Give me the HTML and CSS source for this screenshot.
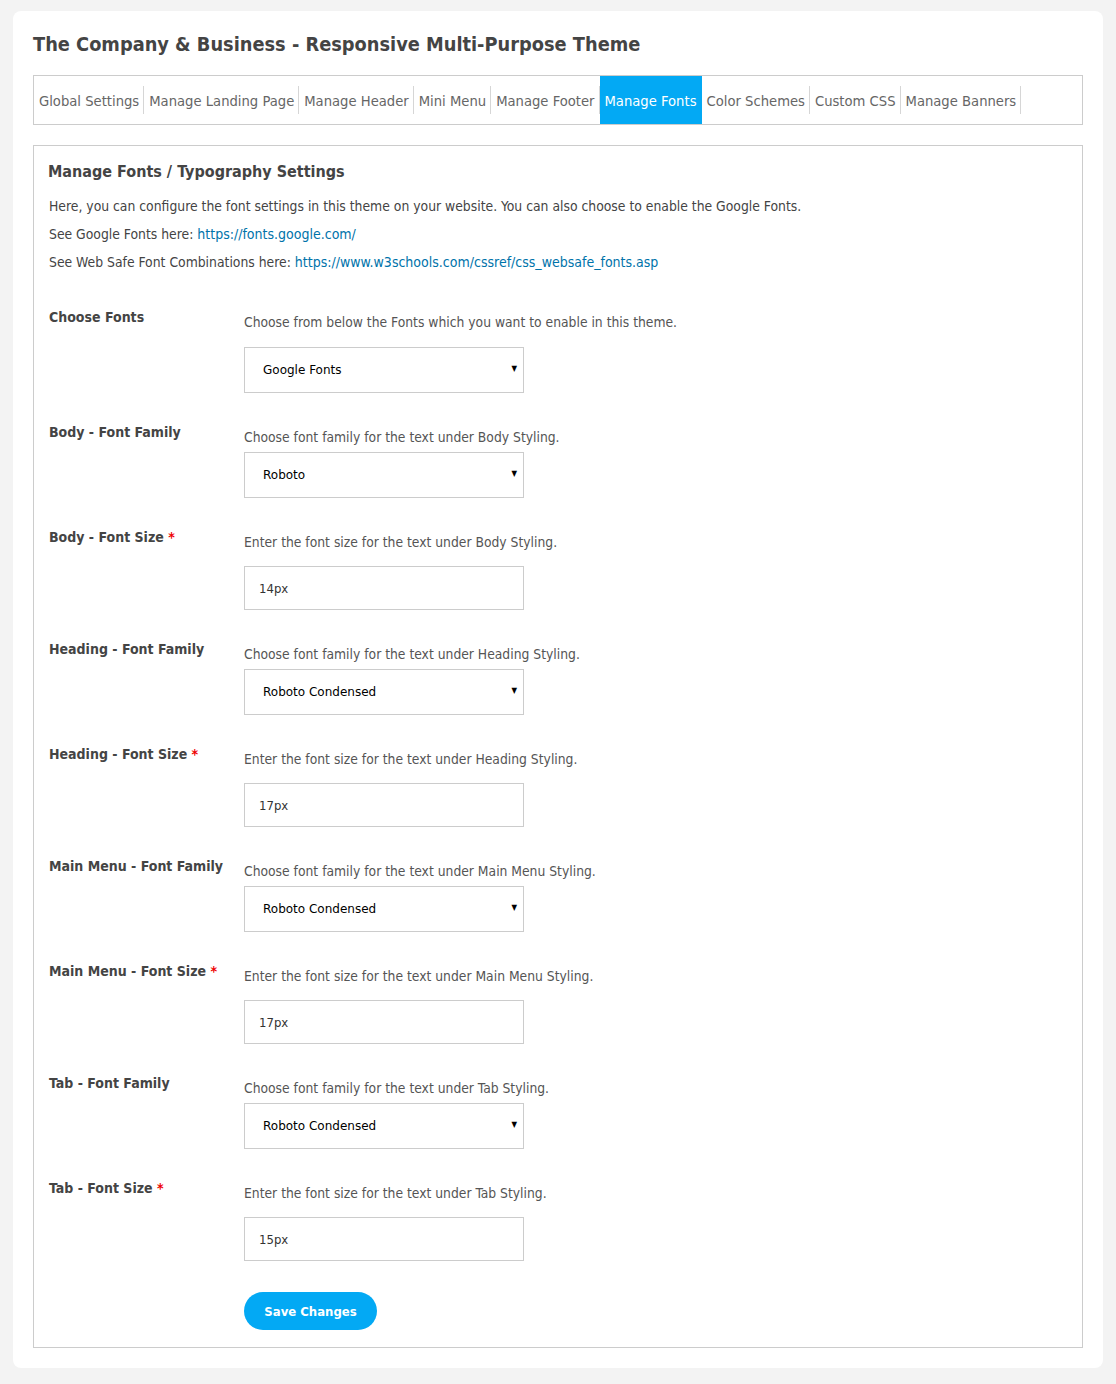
FILE: index.html
```html
<!DOCTYPE html>
<html lang="en">
<head>
    <meta charset="UTF-8">
    <meta name="viewport" content="width=device-width, initial-scale=1.0">
    <title>Manage Fonts</title>
    <link rel="stylesheet" href="styles.css">
</head>
<body>
    <div class="wrap">
        <h1 class="page-title">The Company &amp; Business - Responsive Multi-Purpose Theme</h1>

        <nav class="tabs">
            <a href="#">Global Settings</a>
            <a href="#">Manage Landing Page</a>
            <a href="#">Manage Header</a>
            <a href="#">Mini Menu</a>
            <a href="#">Manage Footer</a>
            <a href="#" class="active">Manage Fonts</a>
            <a href="#">Color Schemes</a>
            <a href="#">Custom CSS</a>
            <a href="#">Manage Banners</a>
        </nav>

        <div class="panel">
            <h2>Manage Fonts / Typography Settings</h2>
            <p class="intro">Here, you can configure the font settings in this theme on your website. You can also choose to enable the Google Fonts.</p>
            <p class="intro">See Google Fonts here: <a href="#">https://fonts.google.com/</a></p>
            <p class="intro">See Web Safe Font Combinations here: <a href="#">https://www.w3schools.com/cssref/css_websafe_fonts.asp</a></p>

            <form class="fields">
                <div class="field first">
                    <label>Choose Fonts</label>
                    <div>
                        <p class="desc">Choose from below the Fonts which you want to enable in this theme.</p>
                        <div class="select-wrap">
                            <select><option>Google Fonts</option></select>
                            <span class="caret">&#9660;</span>
                        </div>
                    </div>
                </div>

                <div class="field">
                    <label>Body - Font Family</label>
                    <div>
                        <p class="desc">Choose font family for the text under Body Styling.</p>
                        <div class="select-wrap">
                            <select><option>Roboto</option></select>
                            <span class="caret">&#9660;</span>
                        </div>
                    </div>
                </div>

                <div class="field">
                    <label>Body - Font Size <span class="req">*</span></label>
                    <div>
                        <p class="desc">Enter the font size for the text under Body Styling.</p>
                        <input type="text" value="14px">
                    </div>
                </div>

                <div class="field">
                    <label>Heading - Font Family</label>
                    <div>
                        <p class="desc">Choose font family for the text under Heading Styling.</p>
                        <div class="select-wrap">
                            <select><option>Roboto Condensed</option></select>
                            <span class="caret">&#9660;</span>
                        </div>
                    </div>
                </div>

                <div class="field">
                    <label>Heading - Font Size <span class="req">*</span></label>
                    <div>
                        <p class="desc">Enter the font size for the text under Heading Styling.</p>
                        <input type="text" value="17px">
                    </div>
                </div>

                <div class="field">
                    <label>Main Menu - Font Family</label>
                    <div>
                        <p class="desc">Choose font family for the text under Main Menu Styling.</p>
                        <div class="select-wrap">
                            <select><option>Roboto Condensed</option></select>
                            <span class="caret">&#9660;</span>
                        </div>
                    </div>
                </div>

                <div class="field">
                    <label>Main Menu - Font Size <span class="req">*</span></label>
                    <div>
                        <p class="desc">Enter the font size for the text under Main Menu Styling.</p>
                        <input type="text" value="17px">
                    </div>
                </div>

                <div class="field">
                    <label>Tab - Font Family</label>
                    <div>
                        <p class="desc">Choose font family for the text under Tab Styling.</p>
                        <div class="select-wrap">
                            <select><option>Roboto Condensed</option></select>
                            <span class="caret">&#9660;</span>
                        </div>
                    </div>
                </div>

                <div class="field">
                    <label>Tab - Font Size <span class="req">*</span></label>
                    <div>
                        <p class="desc">Enter the font size for the text under Tab Styling.</p>
                        <input type="text" value="15px">
                    </div>
                </div>

                <div class="field actions">
                    <span></span>
                    <div>
                        <button type="button">Save Changes</button>
                    </div>
                </div>
            </form>
        </div>
    </div>
</body>
</html>
```

FILE: styles.css
```css
body {
    margin: 0;
    padding: 11px 13px 17px;
    background-color: #f3f3f3;
    font-family: "DejaVu Sans Condensed", "DejaVu Sans", sans-serif;
    color: #555;
}

.wrap {
    background-color: #fff;
    border-radius: 8px;
    padding: 21px 20px 20px;
}

.page-title {
    margin: 0 0 17px;
    font-size: 19.8px;
    line-height: 26px;
    font-weight: bold;
    color: #444;
}

.tabs {
    display: flex;
    height: 48px;
    border: 1px solid #ccc;
}

.tabs a {
    display: flex;
    align-items: center;
    padding: 1px 5px 0;
    font-size: 14.65px;
    color: #666;
    text-decoration: none;
    background: linear-gradient(#d6d6d6, #d6d6d6) right center / 1px 28px no-repeat;
}

.tabs a.active {
    background: #03a9f4;
    color: #fff;
}

.panel {
    margin-top: 20px;
    border: 1px solid #ccc;
    padding: 14px 15px 17px 14px;
}

.panel h2 {
    margin: 0 0 8px;
    font-size: 16px;
    line-height: 24px;
    color: #444;
}

.intro {
    margin: 0 0 0 1px;
    font-size: 13.8px;
    line-height: 28px;
    color: #444;
}

.intro a {
    color: #0073aa;
    text-decoration: none;
    font-size: 14px;
}

.fields {
    margin-top: 31px;
    padding-left: 1px;
}

.field {
    display: grid;
    grid-template-columns: 195px 1fr;
    padding-bottom: 29px;
}

.field label {
    font-size: 14px;
    line-height: 20px;
    font-weight: bold;
    color: #444;
}

.req {
    color: #e00;
}

.desc {
    margin: 5px 0 0;
    font-size: 13.75px;
    line-height: 20px;
    color: #555;
}

.select-wrap {
    position: relative;
    width: 280px;
    margin-top: 5px;
}

.first .select-wrap {
    margin-top: 15px;
}

.select-wrap select {
    appearance: none;
    display: block;
    width: 280px;
    height: 46px;
    border: 1px solid #ccc;
    border-radius: 0;
    background: #fff;
    padding: 0 30px 0 18px;
    font-family: "DejaVu Sans", sans-serif;
    font-size: 12px;
    color: #000;
}

.caret {
    position: absolute;
    right: 7px;
    top: 17px;
    font-size: 8px;
    color: #000;
    pointer-events: none;
}

.field input {
    display: block;
    box-sizing: border-box;
    width: 280px;
    height: 44px;
    margin-top: 14px;
    border: 1px solid #ccc;
    padding: 0 14px;
    font-family: "DejaVu Sans Condensed", "DejaVu Sans", sans-serif;
    font-size: 13px;
    color: #333;
}

.actions {
    padding-bottom: 0;
}

.actions button {
    margin-top: 2px;
    width: 133px;
    height: 38px;
    border: 0;
    border-radius: 19px;
    background-color: #03a9f4;
    color: #fff;
    font-family: "DejaVu Sans Condensed", "DejaVu Sans", sans-serif;
    font-size: 13px;
    font-weight: bold;
    cursor: pointer;
}
```
